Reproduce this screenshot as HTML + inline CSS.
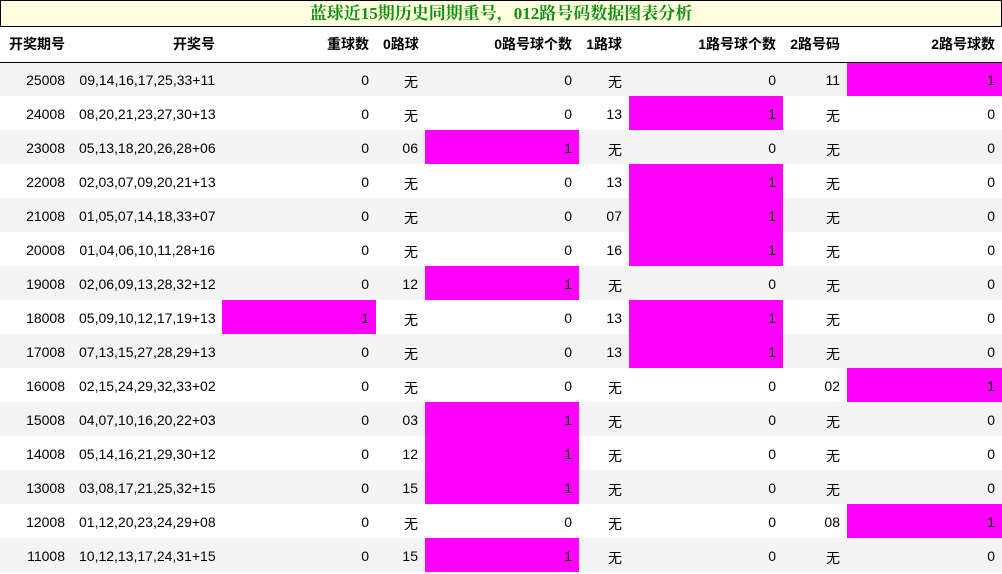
<!DOCTYPE html>
<html><head><meta charset="utf-8"><style>
*{margin:0;padding:0;box-sizing:border-box}
body{width:1002px;height:574px;background:#fff;font-family:"Liberation Sans","Noto Sans CJK SC",sans-serif;font-size:14px;color:#000;overflow:hidden}
.title{height:27px;border:1px solid #000;background:#ffffe0;text-align:center;font:bold 17px "Liberation Serif","Noto Serif CJK SC",serif;color:#119011;line-height:25px}
table{border-collapse:collapse;table-layout:fixed;width:1002px}
td,th{height:34px;padding:1px 7px 0;text-align:right;white-space:nowrap;overflow:hidden}
th{height:35px;padding:0 7px;font-weight:bold;border-bottom:1px solid #000}
tr.g td{background:#f4f4f4}
td.m{background:#ff00ff!important}
.w{position:relative;top:2px}
</style></head><body>
<div class="title">蓝球近15期历史同期重号，012路号码数据图表分析</div>
<table>
<colgroup><col style="width:72px"><col style="width:150px"><col style="width:154px"><col style="width:49px"><col style="width:154px"><col style="width:50px"><col style="width:154px"><col style="width:64px"><col style="width:155px"></colgroup>
<tr><th>开奖期号</th><th>开奖号</th><th>重球数</th><th>0路球</th><th>0路号球个数</th><th>1路球</th><th>1路号球个数</th><th>2路号码</th><th>2路号球数</th></tr>
<tr class="g"><td>25008</td><td>09,14,16,17,25,33+11</td><td>0</td><td><span class="w">无</span></td><td>0</td><td><span class="w">无</span></td><td>0</td><td>11</td><td class="m">1</td></tr>
<tr><td>24008</td><td>08,20,21,23,27,30+13</td><td>0</td><td><span class="w">无</span></td><td>0</td><td>13</td><td class="m">1</td><td><span class="w">无</span></td><td>0</td></tr>
<tr class="g"><td>23008</td><td>05,13,18,20,26,28+06</td><td>0</td><td>06</td><td class="m">1</td><td><span class="w">无</span></td><td>0</td><td><span class="w">无</span></td><td>0</td></tr>
<tr><td>22008</td><td>02,03,07,09,20,21+13</td><td>0</td><td><span class="w">无</span></td><td>0</td><td>13</td><td class="m">1</td><td><span class="w">无</span></td><td>0</td></tr>
<tr class="g"><td>21008</td><td>01,05,07,14,18,33+07</td><td>0</td><td><span class="w">无</span></td><td>0</td><td>07</td><td class="m">1</td><td><span class="w">无</span></td><td>0</td></tr>
<tr><td>20008</td><td>01,04,06,10,11,28+16</td><td>0</td><td><span class="w">无</span></td><td>0</td><td>16</td><td class="m">1</td><td><span class="w">无</span></td><td>0</td></tr>
<tr class="g"><td>19008</td><td>02,06,09,13,28,32+12</td><td>0</td><td>12</td><td class="m">1</td><td><span class="w">无</span></td><td>0</td><td><span class="w">无</span></td><td>0</td></tr>
<tr><td>18008</td><td>05,09,10,12,17,19+13</td><td class="m">1</td><td><span class="w">无</span></td><td>0</td><td>13</td><td class="m">1</td><td><span class="w">无</span></td><td>0</td></tr>
<tr class="g"><td>17008</td><td>07,13,15,27,28,29+13</td><td>0</td><td><span class="w">无</span></td><td>0</td><td>13</td><td class="m">1</td><td><span class="w">无</span></td><td>0</td></tr>
<tr><td>16008</td><td>02,15,24,29,32,33+02</td><td>0</td><td><span class="w">无</span></td><td>0</td><td><span class="w">无</span></td><td>0</td><td>02</td><td class="m">1</td></tr>
<tr class="g"><td>15008</td><td>04,07,10,16,20,22+03</td><td>0</td><td>03</td><td class="m">1</td><td><span class="w">无</span></td><td>0</td><td><span class="w">无</span></td><td>0</td></tr>
<tr><td>14008</td><td>05,14,16,21,29,30+12</td><td>0</td><td>12</td><td class="m">1</td><td><span class="w">无</span></td><td>0</td><td><span class="w">无</span></td><td>0</td></tr>
<tr class="g"><td>13008</td><td>03,08,17,21,25,32+15</td><td>0</td><td>15</td><td class="m">1</td><td><span class="w">无</span></td><td>0</td><td><span class="w">无</span></td><td>0</td></tr>
<tr><td>12008</td><td>01,12,20,23,24,29+08</td><td>0</td><td><span class="w">无</span></td><td>0</td><td><span class="w">无</span></td><td>0</td><td>08</td><td class="m">1</td></tr>
<tr class="g"><td>11008</td><td>10,12,13,17,24,31+15</td><td>0</td><td>15</td><td class="m">1</td><td><span class="w">无</span></td><td>0</td><td><span class="w">无</span></td><td>0</td></tr>
</table>
</body></html>
